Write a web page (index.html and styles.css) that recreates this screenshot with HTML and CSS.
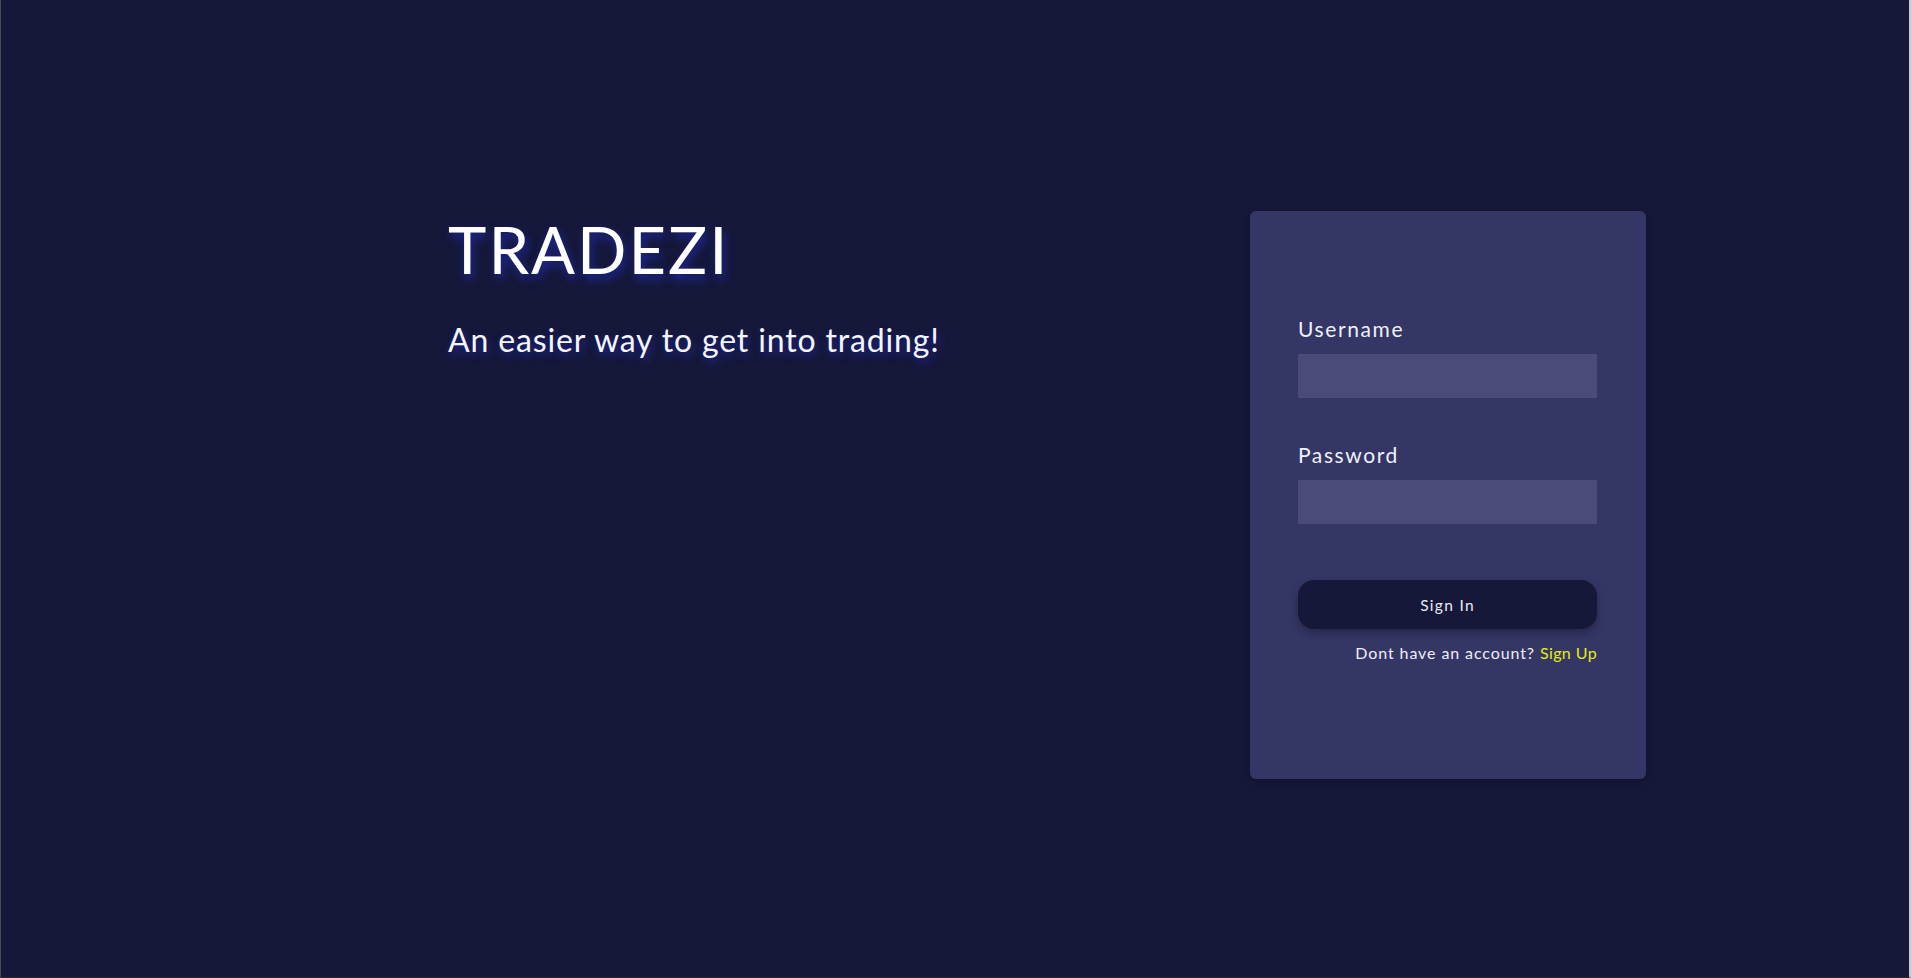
FILE: index.html
```html
<!DOCTYPE html>
<html lang="en">
<head>
<meta charset="utf-8">
<title>Tradezi</title>
<link rel="stylesheet" href="styles.css">
</head>
<body>
<div class="page">
  <section class="hero">
    <h1 class="hero-title">TRADEZI</h1>
    <p class="hero-sub">An easier way to get into trading!</p>
  </section>
  <form class="card">
    <label class="field-label" for="username">Username</label>
    <input class="field-input" id="username" type="text">
    <label class="field-label field-label--spaced" for="password">Password</label>
    <input class="field-input" id="password" type="password">
    <button class="btn" type="button">Sign In</button>
    <p class="signup">Dont have an account? <a class="signup-link" href="#">Sign Up</a></p>
  </form>
</div>
</body>
</html>
```

FILE: styles.css
```css
* { box-sizing: border-box; }
html, body { margin: 0; padding: 0; }
body {
  background: #151839;
  font-family: Lato, "Noto Sans", sans-serif;
  color: #f0f0fa;
}
.page {
  height: 978px;
  display: grid;
  grid-template-columns: 1fr 396px;
  align-items: start;
  padding: 210px 263px 0 447px;
  border-left: 1px solid #4a4a55;
  border-right: 2px solid #c9c9d0;
  border-bottom: 1px solid #2a2a33;
}
.hero-title {
  margin: 0;
  font-size: 65px;
  line-height: 78px;
  font-weight: 400;
  letter-spacing: 2px;
  color: #ffffff;
  text-shadow: 2px 5px 10px rgba(32, 42, 170, 0.95);
}
.hero-sub {
  margin: 33px 0 0;
  font-size: 32px;
  line-height: 38px;
  font-weight: 400;
  letter-spacing: 0.85px;
  color: #f4f4fc;
  text-shadow: 2px 4px 9px rgba(32, 42, 170, 0.9);
}
.card {
  margin: 1px 0 0;
  height: 568px;
  background: #343765;
  border-radius: 6px;
  padding: 105px 49px 0 48px;
  display: flex;
  flex-direction: column;
  box-shadow: 0 3px 8px rgba(0, 0, 0, 0.25);
}
.field-label {
  font-size: 21px;
  line-height: 25px;
  letter-spacing: 1.6px;
  color: #f0f0fa;
}
.field-label--spaced { margin-top: 44px; }
.field-input {
  margin-top: 13px;
  height: 44px;
  width: 100%;
  border: none;
  border-radius: 0;
  background: #4a4b78;
  color: #fff;
  font-family: inherit;
  font-size: 16px;
  padding: 0 12px;
  outline: none;
}
.btn {
  margin-top: 56px;
  height: 49px;
  width: 100%;
  border: none;
  border-radius: 16px;
  background: #151839;
  color: #e8e8f6;
  font-family: inherit;
  font-size: 15.5px;
  letter-spacing: 1.3px;
  box-shadow: 0 4px 8px rgba(0, 0, 0, 0.3);
  cursor: pointer;
}
.signup {
  margin: 14px 0 0;
  text-align: right;
  font-size: 16px;
  line-height: 20px;
  letter-spacing: 0.9px;
  color: #eeeef8;
}
.signup-link {
  color: #e4ee0c;
  text-decoration: none;
  letter-spacing: 0.4px;
}
```
